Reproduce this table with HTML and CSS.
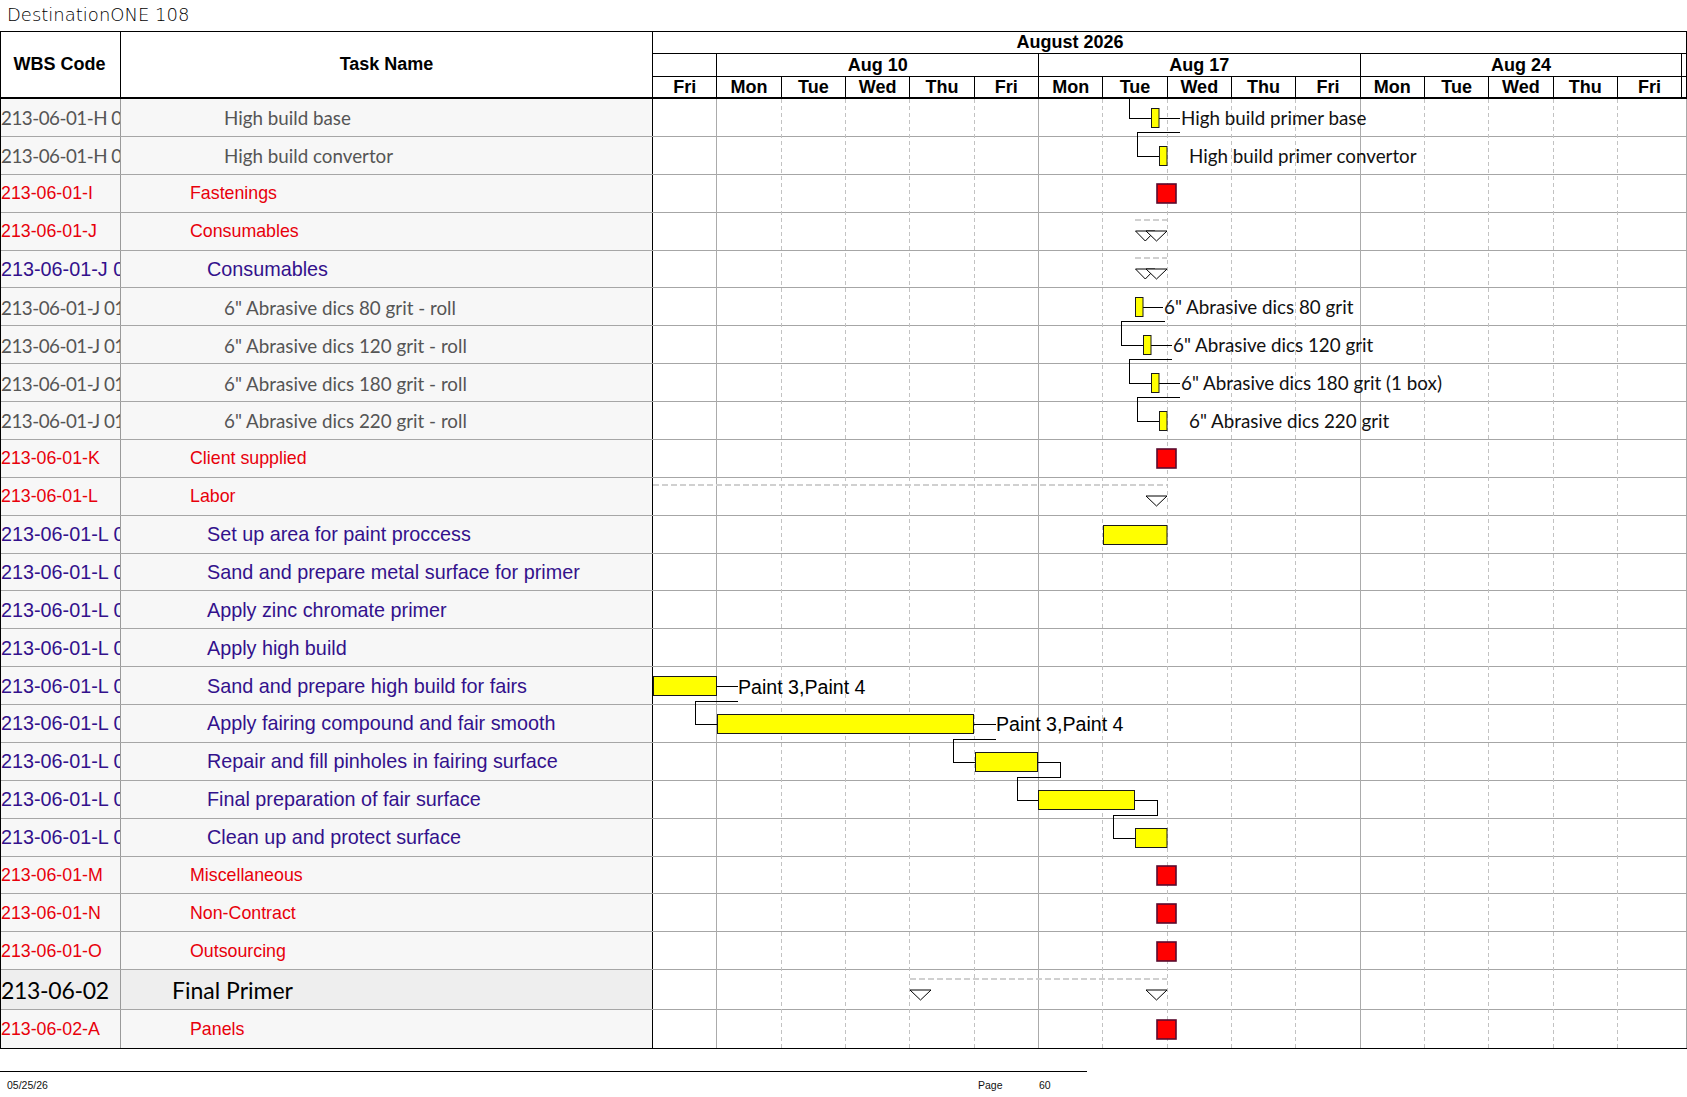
FILE: index.html
```html
<!DOCTYPE html>
<html>
<head>
<meta charset="utf-8">
<title>DestinationONE 108</title>
<link rel="stylesheet" href="styles.css">
</head>
<body>
<div class="title">DestinationONE 108</div>
<div class="sheet">
  <div class="head">
    <div class="h-cell h-wbs">WBS Code</div>
    <div class="h-cell h-task">Task Name</div>
    <div class="h-chart">
      <div class="h-month"><span class="month-label">August 2026</span></div>
      <div class="h-weeks">
        <div class="wk wk-lead"></div>
        <div class="wk">Aug 10</div>
        <div class="wk">Aug 17</div>
        <div class="wk">Aug 24</div>
        <div class="wk wk-tail"></div>
      </div>
      <div class="h-days">
        <div class="day">Fri</div>
        <div class="day">Mon</div><div class="day">Tue</div><div class="day">Wed</div><div class="day">Thu</div><div class="day">Fri</div>
        <div class="day">Mon</div><div class="day">Tue</div><div class="day">Wed</div><div class="day">Thu</div><div class="day">Fri</div>
        <div class="day">Mon</div><div class="day">Tue</div><div class="day">Wed</div><div class="day">Thu</div><div class="day">Fri</div>
        <div class="day day-tail"></div>
      </div>
    </div>
  </div>
  <div class="body">
    <div class="row gray"><div class="c wbs">213-06-01-H 01.01</div><div class="c task l3">High build base</div><div class="gc"></div></div>
    <div class="row gray"><div class="c wbs">213-06-01-H 01.02</div><div class="c task l3">High build convertor</div><div class="gc"></div></div>
    <div class="row red"><div class="c wbs">213-06-01-I</div><div class="c task l1">Fastenings</div><div class="gc"></div></div>
    <div class="row red"><div class="c wbs">213-06-01-J</div><div class="c task l1">Consumables</div><div class="gc"></div></div>
    <div class="row purple"><div class="c wbs">213-06-01-J 01</div><div class="c task l2">Consumables</div><div class="gc"></div></div>
    <div class="row gray"><div class="c wbs">213-06-01-J 01.01</div><div class="c task l3">6" Abrasive dics 80 grit - roll</div><div class="gc"></div></div>
    <div class="row gray"><div class="c wbs">213-06-01-J 01.02</div><div class="c task l3">6" Abrasive dics 120 grit - roll</div><div class="gc"></div></div>
    <div class="row gray"><div class="c wbs">213-06-01-J 01.03</div><div class="c task l3">6" Abrasive dics 180 grit - roll</div><div class="gc"></div></div>
    <div class="row gray"><div class="c wbs">213-06-01-J 01.04</div><div class="c task l3">6" Abrasive dics 220 grit - roll</div><div class="gc"></div></div>
    <div class="row red"><div class="c wbs">213-06-01-K</div><div class="c task l1">Client supplied</div><div class="gc"></div></div>
    <div class="row red"><div class="c wbs">213-06-01-L</div><div class="c task l1">Labor</div><div class="gc"></div></div>
    <div class="row purple"><div class="c wbs">213-06-01-L 01</div><div class="c task l2">Set up area for paint proccess</div><div class="gc"></div></div>
    <div class="row purple"><div class="c wbs">213-06-01-L 02</div><div class="c task l2">Sand and prepare metal surface for primer</div><div class="gc"></div></div>
    <div class="row purple"><div class="c wbs">213-06-01-L 03</div><div class="c task l2">Apply zinc chromate primer</div><div class="gc"></div></div>
    <div class="row purple"><div class="c wbs">213-06-01-L 04</div><div class="c task l2">Apply high build</div><div class="gc"></div></div>
    <div class="row purple"><div class="c wbs">213-06-01-L 05</div><div class="c task l2">Sand and prepare high build for fairs</div><div class="gc"></div></div>
    <div class="row purple"><div class="c wbs">213-06-01-L 06</div><div class="c task l2">Apply fairing compound and fair smooth</div><div class="gc"></div></div>
    <div class="row purple"><div class="c wbs">213-06-01-L 07</div><div class="c task l2">Repair and fill pinholes in fairing surface</div><div class="gc"></div></div>
    <div class="row purple"><div class="c wbs">213-06-01-L 08</div><div class="c task l2">Final preparation of fair surface</div><div class="gc"></div></div>
    <div class="row purple"><div class="c wbs">213-06-01-L 09</div><div class="c task l2">Clean up and protect surface</div><div class="gc"></div></div>
    <div class="row red"><div class="c wbs">213-06-01-M</div><div class="c task l1">Miscellaneous</div><div class="gc"></div></div>
    <div class="row red"><div class="c wbs">213-06-01-N</div><div class="c task l1">Non-Contract</div><div class="gc"></div></div>
    <div class="row red"><div class="c wbs">213-06-01-O</div><div class="c task l1">Outsourcing</div><div class="gc"></div></div>
    <div class="row big tall"><div class="c wbs">213-06-02</div><div class="c task l0">Final Primer</div><div class="gc"></div></div>
    <div class="row red last"><div class="c wbs">213-06-02-A</div><div class="c task l1">Panels</div><div class="gc"></div></div>

    <svg class="gantt" viewBox="653 99 1034 949" width="1034" height="949" xmlns="http://www.w3.org/2000/svg">
      <g class="grid-solid">
        <line x1="716.83" y1="99" x2="716.83" y2="1048"/>
        <line x1="1038.48" y1="99" x2="1038.48" y2="1048"/>
        <line x1="1360.13" y1="99" x2="1360.13" y2="1048"/>
      </g>
      <g class="grid-dash">
        <line x1="781.16" y1="99" x2="781.16" y2="1048"/>
        <line x1="845.49" y1="99" x2="845.49" y2="1048"/>
        <line x1="909.82" y1="99" x2="909.82" y2="1048"/>
        <line x1="974.15" y1="99" x2="974.15" y2="1048"/>
        <line x1="1102.81" y1="99" x2="1102.81" y2="1048"/>
        <line x1="1167.14" y1="99" x2="1167.14" y2="1048"/>
        <line x1="1231.47" y1="99" x2="1231.47" y2="1048"/>
        <line x1="1295.80" y1="99" x2="1295.80" y2="1048"/>
        <line x1="1424.46" y1="99" x2="1424.46" y2="1048"/>
        <line x1="1488.79" y1="99" x2="1488.79" y2="1048"/>
        <line x1="1553.12" y1="99" x2="1553.12" y2="1048"/>
        <line x1="1617.45" y1="99" x2="1617.45" y2="1048"/>
      </g>

      <!-- summary dashed lines -->
      <g class="sum-line">
        <line x1="1135" y1="220" x2="1167" y2="220"/>
        <line x1="1135" y1="258" x2="1167" y2="258"/>
        <line x1="653" y1="485" x2="1167" y2="485"/>
        <line x1="910" y1="979" x2="1167" y2="979"/>
      </g>

      <!-- connectors -->
      <g class="link">
        <path d="M1129.5,99 V118.5 H1151"/>
        <path d="M1159,118.5 H1180"/>
        <path d="M1180,132.5 H1137.5 V156.5 H1159"/>
        <path d="M1143,307.5 H1163"/>
        <path d="M1165,321.5 H1121.5 V345.5 H1143"/>
        <path d="M1151,345.5 H1172"/>
        <path d="M1172,359.5 H1129.5 V383.5 H1151"/>
        <path d="M1159,383.5 H1180"/>
        <path d="M1180,397.5 H1137.5 V421.5 H1159"/>
        <path d="M717,686.5 H738"/>
        <path d="M738,701.5 H695.5 V724.5 H717"/>
        <path d="M974,724.5 H996"/>
        <path d="M996,739.5 H953.5 V762.5 H975"/>
        <path d="M1038,762.5 H1060.5 V777.5 H1017.5 V800.5 H1038"/>
        <path d="M1135,800.5 H1157.5 V815.5 H1113.5 V838.5 H1135"/>
      </g>

      <!-- task bars -->
      <g class="bar">
        <rect x="1151.5" y="108.5" width="7.5" height="19"/>
        <rect x="1159.5" y="146.5" width="7.5" height="19"/>
        <rect x="1135.5" y="297.5" width="7.5" height="19"/>
        <rect x="1143.5" y="335.5" width="7.5" height="19"/>
        <rect x="1151.5" y="373.5" width="7.5" height="19"/>
        <rect x="1159.5" y="411.5" width="7.5" height="19"/>
        <rect x="1103.5" y="525.5" width="63.5" height="19"/>
        <rect x="653.5" y="676.5" width="63" height="19"/>
        <rect x="717.5" y="714.5" width="256" height="19"/>
        <rect x="975.5" y="752.5" width="62" height="19"/>
        <rect x="1038.5" y="790.5" width="96" height="19"/>
        <rect x="1135.5" y="828.5" width="31.5" height="19"/>
      </g>

      <!-- milestones -->
      <g class="ms">
        <rect x="1157" y="184" width="19" height="19"/>
        <rect x="1157" y="449" width="19" height="19"/>
        <rect x="1157" y="866" width="19" height="19"/>
        <rect x="1157" y="904" width="19" height="19"/>
        <rect x="1157" y="942" width="19" height="19"/>
        <rect x="1157" y="1020" width="19" height="19"/>
      </g>

      <!-- summary markers -->
      <g class="tri">
        <polygon points="1135.5,231 1155,231 1145.3,241"/>
        <polygon points="1146,231 1167,231 1156.5,241"/>
        <polygon points="1135.5,269 1155,269 1145.3,279"/>
        <polygon points="1146,269 1167,269 1156.5,279"/>
        <polygon points="1146,496 1167,496 1156.5,506"/>
        <polygon points="910,990 931,990 920.5,1000"/>
        <polygon points="1146,990 1167,990 1156.5,1000"/>
      </g>

      <!-- labels -->
      <g class="lbl">
        <text x="1181" y="125">High build primer base</text>
        <text x="1189" y="163">High build primer convertor</text>
        <text x="1164" y="314">6" Abrasive dics 80 grit</text>
        <text x="1173" y="352">6" Abrasive dics 120 grit</text>
        <text x="1181" y="390">6" Abrasive dics 180 grit (1 box)</text>
        <text x="1189" y="428">6" Abrasive dics 220 grit</text>
      </g>
      <g class="plbl">
        <text x="738" y="693.6">Paint 3,Paint 4</text>
        <text x="996" y="731.4">Paint 3,Paint 4</text>
      </g>
    </svg>
  </div>
</div>
<div class="footer">
  <span class="f-date">05/25/26</span>
  <span class="f-page">Page</span>
  <span class="f-num">60</span>
</div>
</body>
</html>
```

FILE: styles.css
```css
* { box-sizing: border-box; }
html, body { margin: 0; padding: 0; background: #fff; }
body {
  width: 1687px;
  font-family: "Liberation Sans", Arial, sans-serif;
  color: #000;
}

.title {
  height: 31px;
  padding-left: 7px;
  font-family: "DejaVu Sans", sans-serif;
  font-weight: 200;
  font-size: 18px;
  line-height: 30px;
  color: #000;
}

.sheet {
  width: 1687px;
  border-top: 1px solid #000;
  border-left: 1px solid #000;
  border-bottom: 1px solid #000;
}

/* ---------- header ---------- */
.head {
  display: grid;
  grid-template-columns: 120px 532px 1034px;
  height: 67px;
  border-bottom: 2px solid #000;
}
.h-cell {
  display: flex;
  align-items: center;
  justify-content: center;
  font-weight: bold;
  font-size: 18px;
  border-right: 1px solid #000;
}
.h-wbs { padding-right: 2px; }
.h-chart {
  display: flex;
  flex-direction: column;
  border-right: 1px solid #000;
}
.h-month {
  height: 22px;
  border-bottom: 1px solid #000;
  font-weight: bold;
  font-size: 18px;
  line-height: 21px;
}
.month-label {
  display: block;
  width: 834px;
  text-align: center;
}
.h-weeks {
  height: 23px;
  display: flex;
  border-bottom: 1px solid #000;
}
.h-days {
  height: 20px;
  display: flex;
}
.wk, .day {
  flex: none;
  border-right: 1px solid #000;
  font-weight: bold;
  font-size: 18px;
  text-align: center;
  white-space: nowrap;
}
.wk { width: 321.65px; line-height: 22px; }
.wk-lead { width: 64.33px; }
.day { width: 64.33px; line-height: 20px; }
.wk-tail, .day-tail { flex: 1; border-right: none; }

/* ---------- body ---------- */
.body { position: relative; }
.row {
  display: grid;
  grid-template-columns: 120px 532px 1034px;
  height: 37.88px;
  border-bottom: 1px solid #a6a6a6;
}
.row.tall { height: 40px; }
.row.last { height: 37.9px; border-bottom: none; }

.c {
  display: flex;
  align-items: center;
  white-space: nowrap;
  overflow: hidden;
  background: #f7f7f7;
  padding-top: 1px;
}
.wbs { border-right: 1px solid #9a9a9a; }
.task { border-right: 1px solid #000; }
.gc { background: #fff; border-right: 1px solid #aaa; }

.l0 { padding-left: 51px; }
.l1 { padding-left: 69px; }
.l2 { padding-left: 86px; }
.l3 { padding-left: 103px; }

.red { color: #e8000b; font-size: 17.8px; }
.purple { color: #33118c; font-size: 19.8px; }
.gray { color: #555; font-family: Lato, "Open Sans", sans-serif; font-size: 18.8px; }
.gray .wbs { letter-spacing: -0.5px; }
.big { color: #000; font-family: Lato, "Open Sans", sans-serif; font-size: 23px; }
.big .wbs { letter-spacing: -0.3px; }
.big .c { background: #eeeeee; }

/* ---------- gantt overlay ---------- */
.gantt {
  position: absolute;
  left: 652px;
  top: 0;
  width: 1034px;
  height: 949px;
  display: block;
}
.grid-solid line { stroke: #ababab; stroke-width: 1; shape-rendering: crispEdges; }
.grid-dash line { stroke: #c2c2c2; stroke-width: 1; stroke-dasharray: 4 3; shape-rendering: crispEdges; }
.sum-line line { stroke: #d0d0d0; stroke-width: 2; stroke-dasharray: 6 3; }
.link path { fill: none; stroke: #000; stroke-width: 1; shape-rendering: crispEdges; }
.bar rect { fill: #ffff00; stroke: #1a1a1a; stroke-width: 1; }
.ms rect { fill: #ff0000; stroke: #5a0a2e; stroke-width: 1.6; }
.tri polygon { fill: #fff; stroke: #000; stroke-width: 1; }
.lbl text { font-family: Lato, "Open Sans", sans-serif; font-size: 18.8px; fill: #111; }
.plbl text { font-family: "Liberation Sans", Arial, sans-serif; font-size: 19.6px; fill: #000; }

/* ---------- footer ---------- */
.footer {
  width: 1087px;
  margin-top: 22px;
  border-top: 1px solid #000;
  display: grid;
  grid-template-columns: 978px 61px auto;
  padding-top: 7px;
  font-size: 10.5px;
  line-height: 12px;
  color: #111;
}
.f-date { padding-left: 7px; }
```
